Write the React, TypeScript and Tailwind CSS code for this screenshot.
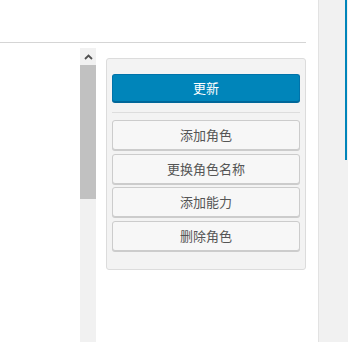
import React from "react";

const font = { fontFamily: '"Noto Sans CJK SC", "Noto Sans", sans-serif' };

function SecButton({ label, className = "" }: { label: string; className?: string }) {
  return (
    <button
      className={
        "h-[30px] w-full rounded-[3px] border border-[#cccccc] bg-[#f7f7f7] text-[13px] leading-[28px] text-[#555555] shadow-[0_1px_0_#cccccc] " +
        className
      }
      style={font}
    >
      {label}
    </button>
  );
}

export default function App() {
  return (
    <div className="flex h-[342px] w-[348px] overflow-hidden bg-white" style={font}>
      <div className="flex w-[318px] flex-col bg-white">
        <div className="mr-[12px] h-[43px] border-b border-[#d5d5d5]" />
        <div className="flex flex-1 pt-[5px]">
          <div className="w-[80px]" />
          <div className="flex w-[16px] flex-col bg-[#f1f1f1]">
            <div className="flex h-[17px] items-center justify-center">
              <svg width="9" height="6" viewBox="0 0 9 6">
                <path d="M1 5 L4.5 1.5 L8 5" stroke="#505050" strokeWidth="1.8" fill="none" />
              </svg>
            </div>
            <div className="h-[134px] bg-[#c1c1c1]" />
          </div>
          <div className="ml-[10px] mt-[10px] h-[212px] w-[200px] rounded-[3px] border border-[#dcdcdc] bg-[#f3f3f3] px-[5px] pt-[15px]">
            <button
              className="h-[28px] w-full rounded-[3px] border border-[#0073aa] border-b-[#006799] bg-[#0085ba] text-[13px] text-white shadow-[0_1px_0_#006799]"
              style={font}
            >
              更新
            </button>
            <div className="mt-[10px] h-px bg-[#dddddd]" />
            <SecButton label="添加角色" className="mt-[7px]" />
            <SecButton label="更换角色名称" className="mt-[4px]" />
            <SecButton label="添加能力" className="mt-[3px]" />
            <SecButton label="删除角色" className="mt-[4px]" />
          </div>
        </div>
      </div>
      <div className="relative w-[30px] border-l border-[#e2e2e2] bg-[#f1f1f1]">
        <div className="absolute right-[1px] top-0 h-[160px] w-[2px] bg-[#0085ba]" />
      </div>
    </div>
  );
}
